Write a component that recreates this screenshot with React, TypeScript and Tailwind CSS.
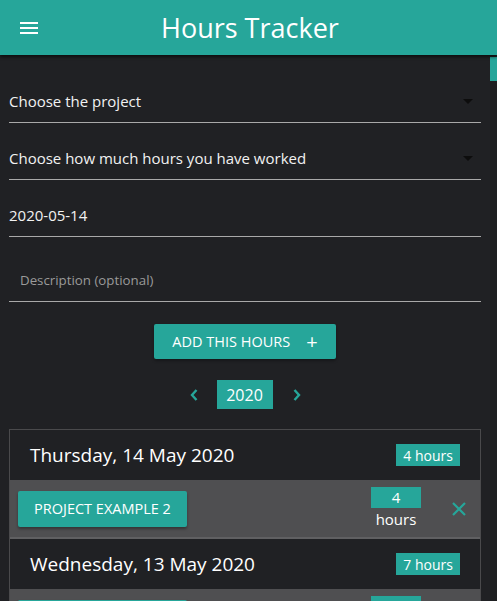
import React from 'react';

const font = { fontFamily: '"Open Sans", "Noto Sans", sans-serif' };

const Caret: React.FC = () => (
  <svg width="10" height="5" viewBox="0 0 10 5" className="shrink-0">
    <path d="M0 0h10L5 5z" fill="#0d0d0d" />
  </svg>
);

const SelectField: React.FC<{ label: string; className?: string }> = ({ label, className }) => (
  <div className={`flex h-[42px] items-center justify-between border-b border-[#a9a9a9] pr-[8px] ${className ?? ''}`}>
    <span className="text-[15px] text-[#f2f2f2]">{label}</span>
    <Caret />
  </div>
);

type Entry = { project: string; hours: number };
type Day = { date: string; total: number; entries: Entry[] };

const days: Day[] = [
  { date: 'Thursday, 14 May 2020', total: 4, entries: [{ project: 'Project example 2', hours: 4 }] },
  { date: 'Wednesday, 13 May 2020', total: 7, entries: [{ project: 'Project example 1', hours: 7 }] },
];

const App: React.FC = () => {
  return (
    <div className="flex h-[601px] flex-col overflow-hidden bg-[#202124]" style={font}>
      <header className="relative z-10 flex h-[55px] shrink-0 items-center bg-[#26a69a] shadow-[0_2px_3px_rgba(0,0,0,0.6)]">
        <button className="ml-[20px] flex h-[12px] w-[18px] flex-col justify-between" aria-label="menu">
          <span className="h-[2px] w-full bg-white" />
          <span className="h-[2px] w-full bg-white" />
          <span className="h-[2px] w-full bg-white" />
        </button>
        <h1 className="ml-[123px] text-[27px] leading-none text-white">Hours Tracker</h1>
      </header>

      <div className="flex min-h-0 flex-1">
        <main className="flex-1 px-[9px]">
          <SelectField label="Choose the project" className="mt-[26px]" />
          <SelectField label="Choose how much hours you have worked" className="mt-[15px]" />
          <div className="mt-[15px] flex h-[42px] items-center border-b border-[#a9a9a9]">
            <span className="text-[15px] text-[#f2f2f2]">2020-05-14</span>
          </div>
          <div className="mt-[23px] flex h-[42px] items-center border-b border-[#a9a9a9] pl-[11px]">
            <span className="text-[13.3px] text-[#9a9a9a]">Description (optional)</span>
          </div>

          <div className="mt-[22px] flex justify-center">
            <button className="flex h-[35px] w-[182px] items-center justify-center gap-[16px] rounded-[2px] bg-[#26a69a] text-[14.5px] text-white shadow-[0_2px_3px_rgba(0,0,0,0.3)]">
              ADD THIS HOURS
              <span className="text-[20px] leading-none">+</span>
            </button>
          </div>

          <div className="mt-[21px] flex items-center justify-center">
            <svg width="10" height="14" viewBox="0 0 10 14" className="mr-[18px]">
              <path d="M7.5 2L3 7l4.5 5" fill="none" stroke="#26a69a" strokeWidth="2.4" />
            </svg>
            <div className="flex h-[29px] w-[56px] items-center justify-center bg-[#26a69a] text-[16px] text-white">2020</div>
            <svg width="10" height="14" viewBox="0 0 10 14" className="ml-[19px]">
              <path d="M2.5 2L7 7l-4.5 5" fill="none" stroke="#26a69a" strokeWidth="2.4" />
            </svg>
          </div>

          <section className="mt-[20px] border border-[#4a4a4c]">
            {days.map((day, i) => (
              <div key={day.date} className={i > 0 ? 'border-t-2 border-[#606062]' : ''}>
                <div className="flex h-[50px] items-center justify-between pl-[20px] pr-[20px]">
                  <span className="text-[19px] text-white">{day.date}</span>
                  <span className="flex h-[22px] items-center bg-[#26a69a] px-[7px] text-[14px] text-white">
                    {day.total} hours
                  </span>
                </div>
                {day.entries.map((e) => (
                  <div key={e.project} className="flex h-[57px] items-center bg-[#4f4f51] pl-[8px] pr-[13px]">
                    <button className="flex h-[36px] w-[169px] items-center justify-center rounded-[2px] bg-[#26a69a] text-[14.5px] uppercase text-white shadow-[0_2px_3px_rgba(0,0,0,0.35)]">
                      {e.project}
                    </button>
                    <div className="ml-auto flex w-[50px] flex-col items-center">
                      <span className="flex h-[21px] w-[50px] items-center justify-center bg-[#26a69a] text-[15px] text-white">
                        {e.hours}
                      </span>
                      <span className="text-[15px] leading-[22px] text-white">hours</span>
                    </div>
                    <svg width="16" height="16" viewBox="0 0 16 16" className="ml-[30px]">
                      <path d="M2 2l12 12M14 2L2 14" stroke="#26a69a" strokeWidth="2.2" />
                    </svg>
                  </div>
                ))}
              </div>
            ))}
          </section>
        </main>
        <aside className="w-[7px] shrink-0 bg-[#1e1f21]">
          <div className="mt-[2px] h-[24px] w-full bg-[#26a69a]" />
        </aside>
      </div>
    </div>
  );
};

export default App;
